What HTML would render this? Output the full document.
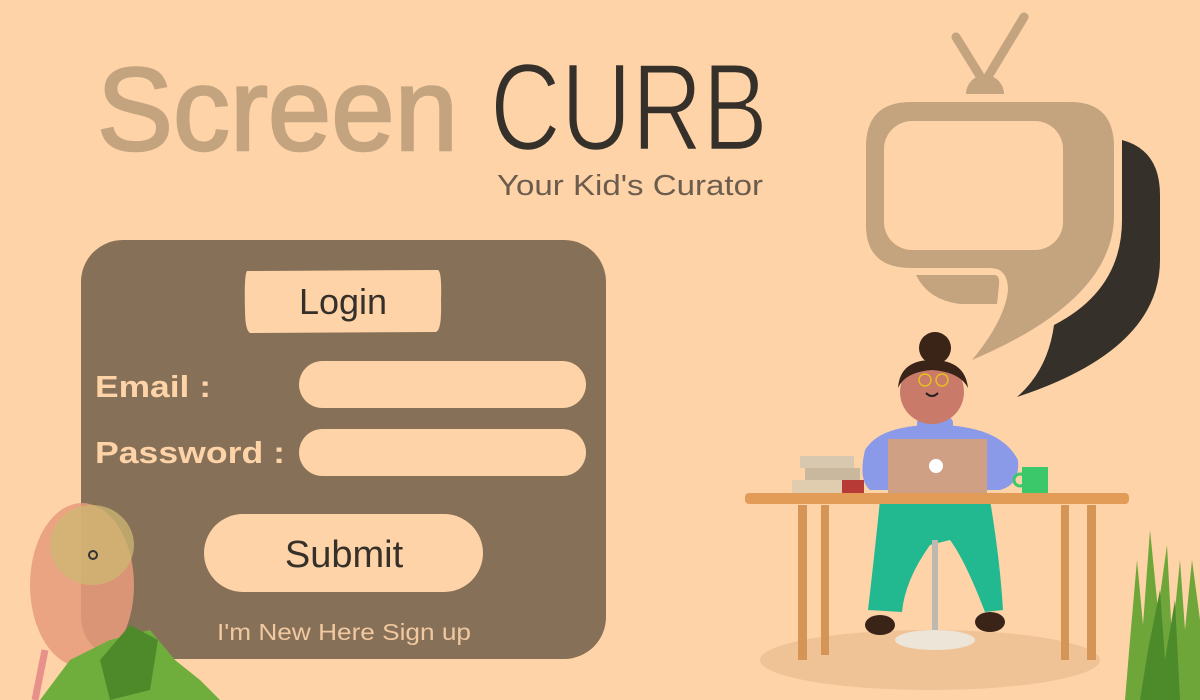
<!DOCTYPE html>
<html><head><meta charset="utf-8"><style>
html,body{margin:0;padding:0;}
body{width:1200px;height:700px;overflow:hidden;background:#fed3a7;position:relative;font-family:"Liberation Sans",sans-serif;}
svg{position:absolute;left:0;top:0;}
</style></head><body>
<svg width="1200" height="700" viewBox="0 0 1200 700">
  <text x="97" y="150" font-family="Liberation Sans" font-size="118" fill="#c4a37f" stroke="#c4a37f" stroke-width="2.5" textLength="361" lengthAdjust="spacingAndGlyphs">Screen</text>
  <text x="490" y="150" font-family="Liberation Sans" font-size="124" fill="#35302a" stroke="#fed3a7" stroke-width="2.5" textLength="278" lengthAdjust="spacingAndGlyphs">CURB</text>
  <text x="497" y="195" font-family="Liberation Sans" font-size="29" fill="#6b5c4e" textLength="266" lengthAdjust="spacingAndGlyphs">Your Kid's Curator</text>

  <line x1="956" y1="37" x2="985" y2="84" stroke="#c4a37f" stroke-width="9" stroke-linecap="round"/>
  <line x1="1024" y1="17" x2="986" y2="80" stroke="#c4a37f" stroke-width="9" stroke-linecap="round"/>
  <path d="M966 94 A18 18 0 0 1 1004 94 Z" fill="#c4a37f"/>
  <path d="M1122 140 Q1160 150 1160 195 L1160 260 Q1160 350 1017 397 Q1048 370 1054 325 Q1122 290 1122 220 Z" fill="#35302a"/>
  <path d="M911 102 L1070 102 Q1114 102 1114 147 L1114 215 Q1114 300 972 360 Q1005 320 1008 290 Q1008 268 990 268 L911 268 Q866 268 866 225 L866 147 Q866 102 911 102 Z" fill="#c4a37f"/>
  <rect x="884" y="121" width="179" height="129" rx="28" fill="#fed3a7"/>
  <path d="M916 275 L995 275 Q1000 276 999 285 L997 304 L960 304 Q928 300 916 275 Z" fill="#c4a37f"/>

  <rect x="81" y="240" width="525" height="419" rx="42" fill="#877058"/>
  <path d="M247 271 L438 270 Q442 272 441 300 Q442 330 436 332 L250 333 Q245 330 245 310 Q244 275 247 271 Z" fill="#fed3a7"/>
  <text x="343" y="314" text-anchor="middle" font-size="36" fill="#35302a">Login</text>
  <text x="95" y="397" font-size="31" font-weight="bold" fill="#fed3a7" textLength="116" lengthAdjust="spacingAndGlyphs">Email :</text>
  <text x="95" y="463" font-size="31" font-weight="bold" fill="#fed3a7" textLength="190" lengthAdjust="spacingAndGlyphs">Password :</text>
  <rect x="299" y="361" width="287" height="47" rx="23.5" fill="#fed3a7"/>
  <rect x="299" y="429" width="287" height="47" rx="23.5" fill="#fed3a7"/>
  <rect x="204" y="514" width="279" height="78" rx="39" fill="#fed3a7"/>
  <text x="344" y="567" text-anchor="middle" font-size="38" fill="#35302a">Submit</text>
  <text x="344" y="640" text-anchor="middle" font-size="23" fill="#f0c9a0" textLength="254" lengthAdjust="spacingAndGlyphs">I'm New Here Sign up</text>

  <ellipse cx="82" cy="585" rx="52" ry="82" fill="#e89b7a" opacity="0.85"/>
  <ellipse cx="92" cy="545" rx="42" ry="40" fill="#cdb873" opacity="0.75"/>
  <line x1="45" y1="650" x2="35" y2="700" stroke="#e8908a" stroke-width="7"/>
  <circle cx="93" cy="555" r="4" fill="none" stroke="#333" stroke-width="2"/>
  <path d="M40 700 L70 660 L110 640 L150 630 L175 660 L200 680 L220 700 Z" fill="#6fae3c"/>
  <path d="M100 660 L130 625 L158 640 L150 690 L110 700 Z" fill="#4f8a2a"/>

  <ellipse cx="930" cy="660" rx="170" ry="30" fill="#e6b98c" opacity="0.6"/>
  <rect x="798" y="505" width="9" height="155" fill="#d59556"/>
  <rect x="821" y="505" width="8" height="150" fill="#d59556"/>
  <rect x="1061" y="505" width="8" height="155" fill="#d59556"/>
  <rect x="1087" y="505" width="9" height="155" fill="#d59556"/>
  <path d="M880 500 L990 500 Q1000 560 1003 610 L985 612 Q965 560 950 540 L930 545 Q905 580 902 612 L868 610 Q875 550 880 500 Z" fill="#22b890"/>
  <rect x="932" y="540" width="6" height="100" fill="#bdb8b0"/>
  <ellipse cx="935" cy="640" rx="40" ry="10" fill="#ece5d8"/>
  <ellipse cx="880" cy="625" rx="15" ry="10" fill="#3a2418"/>
  <ellipse cx="990" cy="622" rx="15" ry="10" fill="#3a2418"/>
  <path d="M865 450 Q880 425 935 425 Q1000 425 1018 460 Q1020 485 1000 490 L870 490 Q858 480 865 450 Z" fill="#8a9ae8"/>
  <rect x="917" y="417" width="36" height="20" rx="6" fill="#8a9ae8"/>
  <circle cx="932" cy="392" r="32" fill="#c97a68"/>
  <circle cx="935" cy="348" r="16" fill="#3a2418"/>
  <path d="M898 388 Q900 360 932 360 Q965 360 968 388 Q960 372 932 370 Q905 372 898 388 Z" fill="#3a2418"/>
  <circle cx="925" cy="380" r="6" fill="none" stroke="#e4c020" stroke-width="1.5"/>
  <circle cx="942" cy="380" r="6" fill="none" stroke="#e4c020" stroke-width="1.5"/>
  <path d="M926 393 Q932 399 938 393" stroke="#222" stroke-width="2" fill="none"/>
  <rect x="888" y="439" width="99" height="55" fill="#cfa084"/>
  <circle cx="936" cy="466" r="7" fill="#fff"/>
  <rect x="800" y="456" width="54" height="12" fill="#d8c8b0"/>
  <rect x="805" y="468" width="55" height="12" fill="#c9b89e"/>
  <rect x="792" y="480" width="72" height="14" fill="#b83a36"/>
  <rect x="792" y="480" width="50" height="14" fill="#e0cdb0"/>
  <rect x="1022" y="467" width="26" height="26" fill="#3bc86a"/>
  <circle cx="1020" cy="480" r="6" fill="none" stroke="#3bc86a" stroke-width="3"/>
  <rect x="745" y="493" width="384" height="11" rx="4" fill="#e39c58"/>
  <path d="M1125 700 L1130 640 L1137 560 L1143 625 L1150 530 L1158 610 L1167 545 L1172 640 L1180 560 L1185 630 L1192 560 L1200 620 L1200 700 Z" fill="#6ea63a"/>
  <path d="M1140 700 L1148 650 L1160 590 L1165 660 L1175 600 L1180 700 Z" fill="#4d8a2a"/>
</svg>
</body></html>
